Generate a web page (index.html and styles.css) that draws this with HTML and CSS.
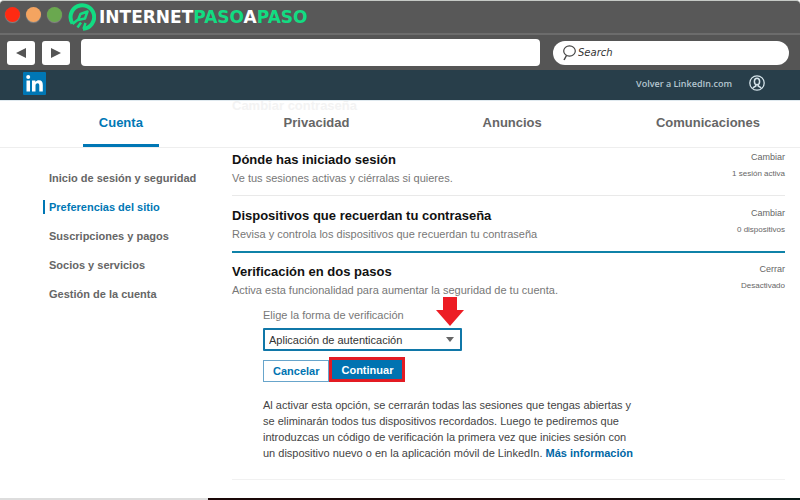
FILE: index.html
```html
<!DOCTYPE html>
<html lang="es">
<head>
    <meta charset="UTF-8">
    <meta name="viewport" content="width=device-width, initial-scale=1.0">
    <title>Verificación en dos pasos</title>
    <link rel="stylesheet" href="styles.css">
</head>
<body>
    <div class="title-bar">
        <div class="lights">
            <span class="light red"></span>
            <span class="light orange"></span>
            <span class="light green"></span>
        </div>
        <a class="brand" href="#">
            <svg class="brand-icon" viewBox="0 0 28 28" fill="none" stroke="#12dc82" aria-hidden="true">
                <path d="M4.500 20.500A11.800 11.800 0 1 1 15 25.800" stroke-width="4"/>
                <path d="M4.500 21L9.500 17M9.500 24.500L13 19.500M15.500 26L17.500 20" stroke-width="2.500"/>
                <path d="M10 17L12.500 11L19.500 8.500L17 15.500Z" stroke-width="2.500" stroke-linejoin="round"/>
            </svg>
            <span>INTERNET<span class="brand-green">PASO</span>A<span class="brand-green">PASO</span></span>
        </a>
    </div>

    <div class="toolbar">
        <button class="arrow-button" type="button" aria-label="Atrás">
            <svg width="10" height="10" viewBox="0 0 10 10"><path d="M0 5L10 0V10Z" fill="#555"/></svg>
        </button>
        <button class="arrow-button" type="button" aria-label="Adelante">
            <svg width="10" height="10" viewBox="0 0 10 10"><path d="M10 5L0 0V10Z" fill="#555"/></svg>
        </button>
        <input class="url" type="text" aria-label="Dirección">
        <div class="search">
            <svg width="14" height="16" viewBox="0 0 14 16" fill="none" stroke="#444" aria-hidden="true">
                <ellipse cx="7.500" cy="6" rx="5.800" ry="5.200" stroke-width="1.200"/>
                <path d="M4.500 10.500L2 15" stroke-width="1.500"/>
            </svg>
            <input type="search" placeholder="Search" aria-label="Search">
        </div>
    </div>

    <header class="site-header">
        <a class="linkedin" href="#" aria-label="LinkedIn">
            <svg width="23" height="23" viewBox="0 0 23 23">
                <rect width="23" height="23" rx="1" fill="#0077b5"/>
                <circle cx="5.200" cy="5" r="2" fill="#fff"/>
                <path d="M3.500 8.500H7V19.500H3.500Z" fill="#fff"/>
                <path d="M9 8.500H12.400V10C13.200 8.800 14.400 8.200 15.900 8.200C18.800 8.200 19.800 10.200 19.800 13V19.500H16.300V13.700C16.300 12.200 15.900 11.200 14.600 11.200C13.100 11.200 12.500 12.300 12.500 13.800V19.500H9Z" fill="#fff"/>
            </svg>
        </a>
        <a class="back-link" href="#">Volver a LinkedIn.com</a>
        <a class="profile" href="#" aria-label="Perfil">
            <svg width="16" height="16" viewBox="0 0 16 16" fill="none" stroke="#d5e3ea">
                <circle cx="8" cy="8" r="7.200" stroke-width="1.300"/>
                <ellipse cx="8" cy="6.500" rx="2.600" ry="3.300" stroke-width="1.500"/>
                <path d="M6.800 9.500V11L3.800 12.800M9.200 9.500V11L12.200 12.800" stroke-width="1.500"/>
            </svg>
        </a>
    </header>

    <nav class="tabs">
        <span class="scrolled-title">Cambiar contraseña</span>
        <a class="tab active" href="#">Cuenta</a>
        <a class="tab" href="#">Privacidad</a>
        <a class="tab" href="#">Anuncios</a>
        <a class="tab last" href="#">Comunicaciones</a>
    </nav>

    <div class="content">
        <aside class="sidebar">
            <a href="#">Inicio de sesión y seguridad</a>
            <a class="active" href="#">Preferencias del sitio</a>
            <a href="#">Suscripciones y pagos</a>
            <a href="#">Socios y servicios</a>
            <a href="#">Gestión de la cuenta</a>
        </aside>

        <main class="settings">
            <section class="setting">
                <div>
                    <h2>Dónde has iniciado sesión</h2>
                    <p>Ve tus sesiones activas y ciérralas si quieres.</p>
                </div>
                <div class="status">
                    <a href="#">Cambiar</a>
                    <span>1 sesión activa</span>
                </div>
            </section>

            <section class="setting">
                <div>
                    <h2>Dispositivos que recuerdan tu contraseña</h2>
                    <p>Revisa y controla los dispositivos que recuerdan tu contraseña</p>
                </div>
                <div class="status">
                    <a href="#">Cambiar</a>
                    <span>0 dispositivos</span>
                </div>
            </section>

            <section class="setting open">
                <div>
                    <h2>Verificación en dos pasos</h2>
                    <p>Activa esta funcionalidad para aumentar la seguridad de tu cuenta.</p>
                </div>
                <div class="status">
                    <a href="#">Cerrar</a>
                    <span>Desactivado</span>
                </div>
            </section>

            <form class="verification">
                <label for="method">Elige la forma de verificación</label>
                <div class="select-wrap">
                    <select id="method">
                        <option>Aplicación de autenticación</option>
                    </select>
                    <svg class="caret" width="8" height="5" viewBox="0 0 8 5"><path d="M0 0H8L4 5Z" fill="#666"/></svg>
                    <svg class="pointer" width="28" height="29" viewBox="0 0 28 29"><path d="M7 0H21V13H28L14 29L0 13H7Z" fill="#ed1c24"/></svg>
                </div>
                <div class="buttons">
                    <button class="cancel" type="button">Cancelar</button>
                    <button class="continue" type="button">Continuar</button>
                </div>
                <p class="note">Al activar esta opción, se cerrarán todas las sesiones que tengas abiertas y se eliminarán todos tus dispositivos recordados. Luego te pediremos que introduzcas un código de verificación la primera vez que inicies sesión con un dispositivo nuevo o en la aplicación móvil de LinkedIn. <a href="#">Más información</a></p>
            </form>
        </main>
    </div>

    <footer class="bottom-edge"></footer>
</body>
</html>
```

FILE: styles.css
```css
* {
    box-sizing: border-box;
}
body {
    font-family: "Liberation Sans", Arial, sans-serif;
    font-size: 11px;
    color: #666;
    background-color: #fff;
    margin: 0;
    min-height: 100vh;
    display: flex;
    flex-direction: column;
}
a {
    color: inherit;
    text-decoration: none;
}
svg {
    display: block;
}

/* Browser window */
.title-bar {
    display: flex;
    align-items: center;
    gap: 6px;
    height: 35px;
    padding: 0 5px;
    background-color: #585858;
    border-top: 1px solid #c5c9c5;
    border-bottom: 2px solid #6c6c6c;
    border-radius: 4px 4px 0 0;
}
.lights {
    display: flex;
    gap: 6px;
    padding-bottom: 6px;
}
.light {
    width: 15px;
    height: 15px;
    border-radius: 50%;
    box-shadow: 0 1px 1px #888;
}
.red {
    background-color: #ff2a12;
}
.orange {
    background-color: #f4a460;
}
.green {
    background-color: #6aa84f;
}
.brand {
    display: flex;
    align-items: center;
    gap: 3px;
    color: #fff;
    font-family: "DejaVu Sans", sans-serif;
    font-size: 17px;
    font-weight: bold;
}
.brand-icon {
    width: 28px;
    height: 28px;
}
.brand-green {
    color: #12dc82;
}
.toolbar {
    display: flex;
    align-items: center;
    gap: 7px;
    height: 35px;
    padding: 0 11px 0 7px;
    background-color: #555;
}
.toolbar input {
    border: none;
    outline: none;
    min-width: 0;
}
.arrow-button {
    display: flex;
    align-items: center;
    justify-content: center;
    width: 28px;
    height: 24px;
    padding: 0;
    border: none;
    border-radius: 3px;
    background-color: #fff;
}
.url {
    flex: 1;
    height: 27px;
    margin: 0 6px 0 4px;
    border-radius: 4px;
    background-color: #fff;
}
.search {
    display: flex;
    align-items: center;
    gap: 2px;
    width: 236px;
    height: 24px;
    padding: 0 9px;
    border-radius: 12px;
    background-color: #fff;
}
.search input {
    flex: 1;
    padding: 0;
    font-family: "DejaVu Sans", sans-serif;
    font-size: 10px;
    font-style: italic;
    background: none;
}
.search input::placeholder {
    color: #333;
}

/* LinkedIn header */
.site-header {
    display: flex;
    align-items: center;
    height: 30px;
    padding: 0 35px 4px 23px;
    background-color: #283e4a;
}
.back-link {
    margin-left: auto;
    margin-right: 17px;
    color: #b5c6d0;
    font-family: "Open Sans", sans-serif;
    font-size: 9px;
    font-weight: 600;
}
.tabs {
    position: relative;
    display: grid;
    grid-template-columns: repeat(3, 1fr) 166px;
    justify-items: center;
    height: 48px;
    padding: 0 24px 0 23px;
    border-top: 1px solid #dfe9ef;
    border-bottom: 1px solid #eee;
}
.tab {
    padding: 0 16px;
    font-size: 13px;
    font-weight: bold;
    line-height: 43px;
    border-bottom: 3px solid transparent;
}
.tab.active {
    color: #0077b5;
    border-color: #0077b5;
}
.tab.last {
    justify-self: end;
}
/* Heading of the setting that is scrolled under the tabs */
.scrolled-title {
    position: absolute;
    top: 0;
    left: 29%;
    color: #f3f3f3;
    font-size: 13px;
    font-weight: bold;
    line-height: 10px;
}

/* Settings */
.content {
    display: flex;
    flex: 1;
    padding: 2px 15px 0 43px;
}
.sidebar {
    display: flex;
    flex-direction: column;
    gap: 15px;
    width: 189px;
    padding-top: 21px;
    font-weight: bold;
    line-height: 14px;
}
.sidebar a {
    padding-left: 4px;
    border-left: 2px solid transparent;
}
.sidebar .active {
    color: #0077b5;
    border-color: #0077b5;
}
.settings {
    flex: 1;
}
.setting {
    display: flex;
    justify-content: space-between;
    padding-bottom: 9px;
}
.setting + .setting {
    padding-top: 10px;
    border-top: 1px solid #e9e9e9;
}
.setting + .open {
    padding-top: 9px;
    border-top: 2px solid #0f82a8;
}
.setting h2 {
    margin: 0;
    color: #111;
    font-size: 13px;
    line-height: 20px;
}
.setting p {
    margin: 0;
    color: #777;
    line-height: 16px;
}
.status {
    display: flex;
    flex-direction: column;
    gap: 2px;
    align-items: flex-end;
    font-size: 9px;
    line-height: 14px;
}
.status span {
    font-size: 8px;
    line-height: 16px;
}
.verification {
    padding: 0 0 18px 31px;
    border-bottom: 1px solid #f1f1f1;
}
.verification label {
    display: block;
    line-height: 16px;
    color: #777;
}
.select-wrap {
    position: relative;
    width: 199px;
    margin: 5px 0 6px;
}
.select-wrap select {
    display: block;
    width: 100%;
    height: 23px;
    padding: 0 20px 0 4px;
    appearance: none;
    color: #333;
    font-family: inherit;
    font-size: 11px;
    background-color: #fff;
    border: 2px solid #1077a8;
    border-radius: 1px;
}
.caret {
    position: absolute;
    top: 9px;
    right: 8px;
}
.pointer {
    position: absolute;
    right: -2px;
    bottom: 25px;
}
.buttons {
    display: flex;
    align-items: flex-end;
}
.buttons button {
    padding: 0 9px;
    font-family: inherit;
    font-size: 11px;
    font-weight: bold;
}
.cancel {
    height: 22px;
    color: #0073b1;
    background-color: #fff;
    border: 1px solid #68a5cb;
}
.continue {
    height: 25px;
    color: #fff;
    background-color: #0073b1;
    border: 3px solid #e31b23;
}
.note {
    max-width: 374px;
    margin: 15px 0 0;
    color: #444;
    line-height: 16px;
}
.note a {
    color: #0067a5;
    font-weight: bold;
}
.bottom-edge {
    height: 2px;
    background: linear-gradient(to right, #ddd 26%, #1a0808 26%, #1a0808 70%, #081a18);
}
```
